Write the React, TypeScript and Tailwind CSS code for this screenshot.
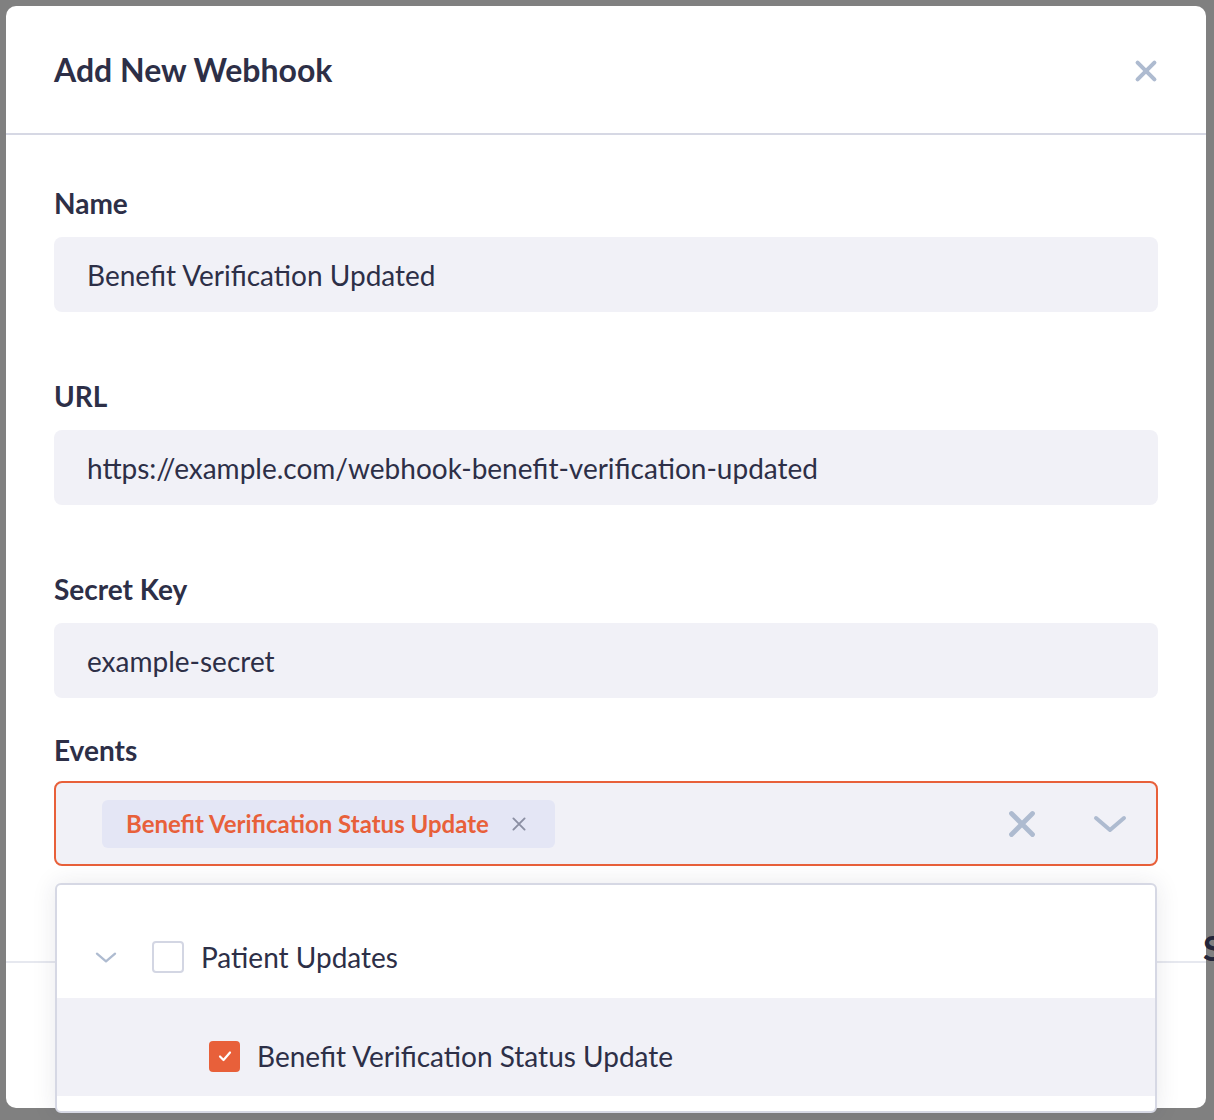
import React from 'react';

const font = { fontFamily: 'Lato, "Noto Sans", sans-serif' };

const XIcon = ({ className, stroke = 3 }: { className?: string; stroke?: number }) => (
  <svg viewBox="0 0 20 20" fill="none" className={className}>
    <path d="M3 3 L17 17 M17 3 L3 17" stroke="currentColor" strokeWidth={stroke} strokeLinecap="round" />
  </svg>
);

const ChevronIcon = ({ className, stroke = 4 }: { className?: string; stroke?: number }) => (
  <svg viewBox="0 0 34 20" fill="none" className={className}>
    <path d="M3 4 L17 16 L31 4" stroke="currentColor" strokeWidth={stroke} strokeLinecap="round" strokeLinejoin="round" />
  </svg>
);

const Field = ({ label, value }: { label: string; value: string }) => (
  <div className="flex flex-col">
    <label className="text-[28px] leading-[34px] font-bold text-[#2d2f47]">{label}</label>
    <div className="mt-[17px] h-[75px] rounded-[8px] bg-[#f1f1f7] flex items-center px-[33px] text-[28px] text-[#2d2f47]">
      {value}
    </div>
  </div>
);

export default function App() {
  return (
    <div className="relative h-[1120px] w-full overflow-hidden bg-[#808080] p-[6px]" style={font}>
      <div className="w-[1200px] h-[1102px] rounded-[10px] bg-white flex flex-col">
        {/* header */}
        <div className="h-[129px] shrink-0 border-b-2 border-[#d6d8e4] px-12 flex items-center justify-between">
          <h2 className="text-[32px] font-bold text-[#2d2f47]">Add New Webhook</h2>
          <XIcon className="w-[24px] h-[24px] mt-[3px] mr-[0px] text-[#aebbd0]" stroke={3.4} />
        </div>

        {/* body */}
        <div className="px-12 pt-[51px] pb-[95px] flex flex-col">
          <Field label="Name" value="Benefit Verification Updated" />
          <div className="h-[67px]" />
          <Field label="URL" value="https://example.com/webhook-benefit-verification-updated" />
          <div className="h-[67px]" />
          <Field label="Secret Key" value="example-secret" />
          <div className="h-[35px]" />
          <div className="flex flex-col">
            <label className="text-[28px] leading-[34px] font-bold text-[#2d2f47]">Events</label>
            <div className="relative mt-[14px]">
              <div className="h-[85px] rounded-[8px] border-2 border-[#e8603a] bg-[#f1f1f7] flex items-center pl-[46px] pr-[29px]">
                <div className="h-[48px] rounded-[6px] bg-[#e4e6f5] flex items-center pl-[24px] pr-[28px]">
                  <span className="text-[24px] font-bold text-[#e8603a]">Benefit Verification Status Update</span>
                  <XIcon className="ml-[22px] w-[16px] h-[16px] text-[#8b8fa3]" stroke={2.4} />
                </div>
                <div className="flex-1" />
                <XIcon className="w-[30px] h-[30px] text-[#aebbd0]" stroke={3.2} />
                <ChevronIcon className="ml-[56px] w-[34px] h-[20px] text-[#aebbd0]" stroke={4} />
              </div>

              {/* dropdown */}
              <div className="absolute left-[1px] right-[1px] top-[102px] z-10 rounded-[6px] border-2 border-[#d6d8e4] bg-white pt-[15px] pb-[15px] shadow-[0_0_24px_rgba(40,44,70,0.10)]">
                <div className="h-[98px] flex items-center pt-[16px] pl-[38px]">
                  <ChevronIcon className="w-[22px] h-[13px] text-[#aebbd0]" stroke={3.5} />
                  <div className="ml-[35px] w-[32px] h-[32px] rounded-[4px] border-2 border-[#d3d6e3] bg-white" />
                  <span className="ml-[17px] text-[28px] text-[#2d2f47]">Patient Updates</span>
                </div>
                <div className="h-[98px] bg-[#f1f1f7] flex items-center pt-[18px] pl-[152px]">
                  <div className="w-[31px] h-[31px] rounded-[4px] bg-[#e8603a] flex items-center justify-center">
                    <svg viewBox="0 0 16 16" fill="none" className="w-[16px] h-[16px]">
                      <path d="M3 8.5 L6.5 12 L13 4.5" stroke="white" strokeWidth={2.2} strokeLinecap="round" strokeLinejoin="round" />
                    </svg>
                  </div>
                  <span className="ml-[17px] text-[28px] text-[#2d2f47]">Benefit Verification Status Update</span>
                </div>
              </div>
            </div>
          </div>
        </div>

        {/* footer */}
        <div className="flex-1 border-t-2 border-[#e6e8ef]" />
      </div>
      <span className="absolute left-[1203px] top-[922px] text-[34px] font-bold text-[#23253a]">S</span>
    </div>
  );
}
